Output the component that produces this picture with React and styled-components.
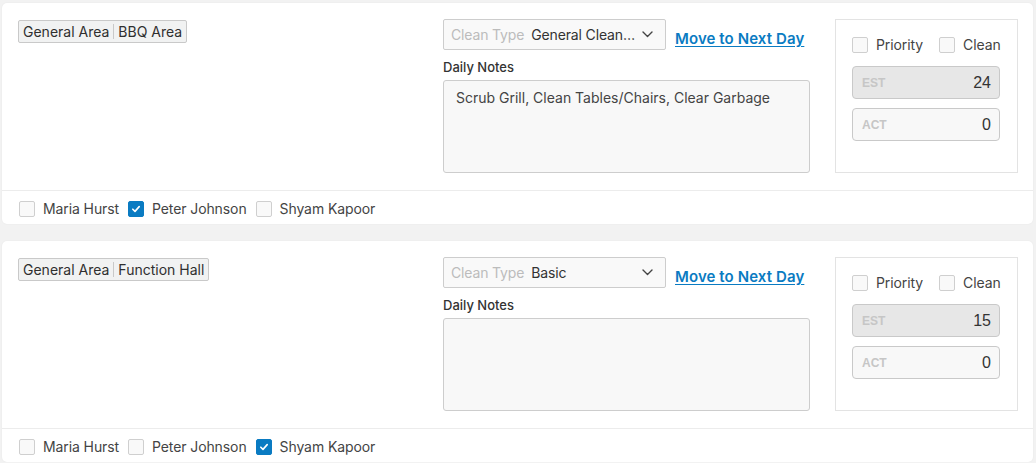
import styled, { createGlobalStyle } from "styled-components";

const GlobalStyle = createGlobalStyle`
  * { box-sizing: border-box; }
  body {
    margin: 0;
    background: #f2f2f2;
    font-family: "Inter", "Liberation Sans", sans-serif;
    color: #333;
  }
`;

const tasks = [
  {
    area: "General Area",
    place: "BBQ Area",
    cleanType: "General Cleaning",
    notes: "Scrub Grill, Clean Tables/Chairs, Clear Garbage",
    est: 24,
    act: 0,
    staff: [
      { name: "Maria Hurst", checked: false },
      { name: "Peter Johnson", checked: true },
      { name: "Shyam Kapoor", checked: false },
    ],
  },
  {
    area: "General Area",
    place: "Function Hall",
    cleanType: "Basic",
    notes: "",
    est: 15,
    act: 0,
    staff: [
      { name: "Maria Hurst", checked: false },
      { name: "Peter Johnson", checked: false },
      { name: "Shyam Kapoor", checked: true },
    ],
  },
];

const CheckIcon = () => (
  <svg width="10" height="10" viewBox="0 0 10 10" fill="none">
    <path d="M1.8 5.2 L4 7.4 L8.2 2.6" stroke="#fff" strokeWidth="1.6" strokeLinecap="round" strokeLinejoin="round" />
  </svg>
);

const Chevron = () => (
  <svg width="11" height="7" viewBox="0 0 11 7" fill="none">
    <path d="M1 1 L5.5 5.5 L10 1" stroke="#444" strokeWidth="1.4" strokeLinecap="round" strokeLinejoin="round" />
  </svg>
);

const CheckItem = ({ label, checked }) => (
  <CheckLabel>
    <Box $checked={checked}>{checked && <CheckIcon />}</Box>
    {label}
  </CheckLabel>
);

const App = () => {
  return (
    <>
      <GlobalStyle />
      <Page>
        {tasks.map((t, i) => (
          <Card key={i}>
            <Top>
              <TagCol>
                <Tag>
                  <TagPart>{t.area}</TagPart>
                  <TagPart>{t.place}</TagPart>
                </Tag>
              </TagCol>
              <Middle>
                <SelectRow>
                  <Select>
                    <Placeholder>Clean Type</Placeholder>
                    <SelectValue title={t.cleanType}>{t.cleanType}</SelectValue>
                    <Chevron />
                  </Select>
                  <MoveLink href="#">Move to Next Day</MoveLink>
                </SelectRow>
                <NotesLabel>Daily Notes</NotesLabel>
                <Notes>{t.notes}</Notes>
              </Middle>
              <SideBox>
                <SideChecks>
                  <CheckItem label="Priority" />
                  <CheckItem label="Clean" />
                </SideChecks>
                <NumField $disabled>
                  <FieldLabel>EST</FieldLabel>
                  <FieldValue>{t.est}</FieldValue>
                </NumField>
                <NumField>
                  <FieldLabel>ACT</FieldLabel>
                  <FieldValue>{t.act}</FieldValue>
                </NumField>
              </SideBox>
            </Top>
            <Footer>
              {t.staff.map((s) => (
                <CheckItem key={s.name} label={s.name} checked={s.checked} />
              ))}
            </Footer>
          </Card>
        ))}
      </Page>
    </>
  );
};

export default App;

const Page = styled.main`
  display: flex;
  flex-direction: column;
  gap: 17px;
  padding: 3px 3px 0 2px;
`;

const Card = styled.section`
  background: #fff;
  border-radius: 5px;
  box-shadow: 0 0 2px rgba(0, 0, 0, 0.06);
  height: 221px;
  display: flex;
  flex-direction: column;
`;

const Top = styled.div`
  display: flex;
  padding: 16px 15px 17px 16px;
  border-bottom: 1px solid #ececec;
`;

const TagCol = styled.div`
  flex: 1;
`;

const Tag = styled.div`
  display: inline-flex;
  border: 1px solid #c9c9c9;
  border-radius: 2px;
  background: #f1f2f2;
  height: 23px;
  align-items: center;
  margin-top: 1px;
`;

const TagPart = styled.span`
  font-size: 14px;
  font-weight: 400;
  color: #2f2f2f;
  padding: 0 4px;
  line-height: 15px;

  & + & {
    border-left: 1px solid #c9c9c9;
    padding-left: 4px;
  }
`;

const Middle = styled.div`
  width: 367px;
  display: flex;
  flex-direction: column;
`;

const SelectRow = styled.div`
  display: flex;
  align-items: center;
`;

const Select = styled.div`
  width: 223px;
  height: 31px;
  border: 1px solid #cdcdcd;
  border-radius: 2px;
  background: #f9f9f9;
  display: flex;
  align-items: center;
  padding: 0 12px 0 7px;
  font-size: 14px;
  letter-spacing: -0.15px;
  gap: 7px;

  svg {
    flex-shrink: 0;
  }
`;

const Placeholder = styled.span`
  color: #bcbcbc;
  white-space: nowrap;
`;

const SelectValue = styled.span`
  flex: 1;
  min-width: 0;
  color: #333;
  white-space: nowrap;
  overflow: hidden;
  text-overflow: ellipsis;
`;

const MoveLink = styled.a`
  margin-left: 9px;
  margin-top: 7px;
  color: #0a7bc2;
  font-size: 15px;
  font-weight: 600;
  letter-spacing: 0.1px;
  text-decoration: underline;
  text-underline-offset: 2px;
`;

const NotesLabel = styled.label`
  margin-top: 9px;
  font-size: 13px;
  font-weight: 500;
  color: #333;
  line-height: 16px;
`;

const Notes = styled.div`
  margin-top: 5px;
  height: 93px;
  border: 1px solid #cdcdcd;
  border-radius: 3px;
  background: #f8f8f8;
  padding: 7px 12px;
  font-size: 14px;
  color: #444;
  line-height: 20px;
`;

const SideBox = styled.div`
  margin-left: 25px;
  width: 183px;
  border: 1px solid #e3e3e3;
  padding: 16px 17px 0 16px;
  display: flex;
  flex-direction: column;
`;

const SideChecks = styled.div`
  display: flex;
  gap: 16px;
  margin-bottom: 13px;
`;

const NumField = styled.div`
  height: 33px;
  border: 1px solid #c9c9c9;
  border-radius: 4px;
  background: ${(p) => (p.$disabled ? "#e7e7e7" : "#f8f8f8")};
  display: flex;
  align-items: center;
  justify-content: space-between;
  padding: 0 8px 0 9px;
  margin-bottom: 9px;
  font-family: "Liberation Sans", Arial, sans-serif;
`;

const FieldLabel = styled.span`
  font-size: 12px;
  font-weight: 700;
  color: #c6c6c6;
`;

const FieldValue = styled.span`
  font-size: 16px;
  color: #333;
`;

const Footer = styled.div`
  flex: 1;
  display: flex;
  align-items: center;
  gap: 9px;
  padding: 2px 17px 0;
`;

const CheckLabel = styled.label`
  display: inline-flex;
  align-items: center;
  gap: 8px;
  font-size: 14px;
  letter-spacing: -0.1px;
  color: #444;
  white-space: nowrap;
`;

const Box = styled.span`
  width: 16px;
  height: 16px;
  border-radius: 2px;
  border: 1px solid ${(p) => (p.$checked ? "#0a7bc2" : "#cfcfcf")};
  background: ${(p) => (p.$checked ? "#0a7bc2" : "#f9f9f9")};
  display: inline-flex;
  align-items: center;
  justify-content: center;
`;
